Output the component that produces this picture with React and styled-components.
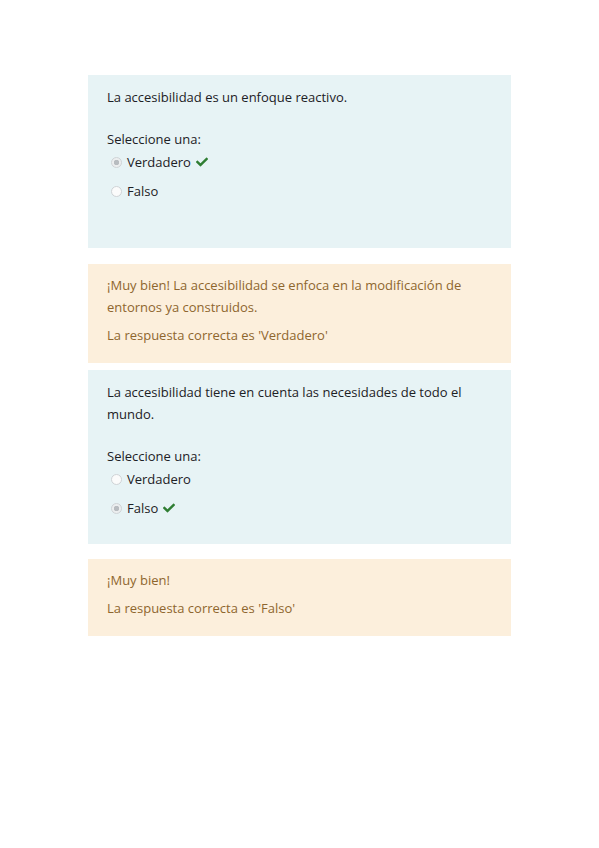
import React from "react";
import styled, { createGlobalStyle } from "styled-components";

const GlobalStyle = createGlobalStyle`
  body {
    margin: 0;
    background: #fff;
    font-family: "Open Sans", "Noto Sans", sans-serif;
  }
`;

const questions = [
  {
    text: "La accesibilidad es un enfoque reactivo.",
    options: ["Verdadero", "Falso"],
    selected: 0,
    bottom: 46,
    gapAfter: 16,
    feedback: [
      "¡Muy bien! La accesibilidad se enfoca en la modificación de entornos ya construidos.",
      "La respuesta correcta es 'Verdadero'",
    ],
    feedbackGap: 7,
  },
  {
    text: "La accesibilidad tiene en cuenta las necesidades de todo el mundo.",
    options: ["Verdadero", "Falso"],
    selected: 1,
    bottom: 25,
    gapAfter: 15,
    feedback: ["¡Muy bien!", "La respuesta correcta es 'Falso'"],
    feedbackGap: 0,
  },
];

function Check() {
  return (
    <CheckIcon viewBox="0 0 512 512" aria-hidden="true">
      <path d="M173.9 439.4l-166.4-166.4c-10-10-10-26.2 0-36.2l36.2-36.2c10-10 26.2-10 36.2 0L192 312.7 432.1 72.6c10-10 26.2-10 36.2 0l36.2 36.2c10 10 10 26.2 0 36.2l-294.4 294.4c-10 10-26.2 10-36.2 0z" />
    </CheckIcon>
  );
}

export default function App() {
  return (
    <>
      <GlobalStyle />
      <Page>
        {questions.map((q, i) => (
          <React.Fragment key={i}>
            <QuestionCard $bottom={q.bottom}>
              <QuestionText>{q.text}</QuestionText>
              <Prompt>Seleccione una:</Prompt>
              {q.options.map((opt, j) => (
                <Option key={opt}>
                  <Radio $checked={j === q.selected} />
                  <OptionLabel>{opt}</OptionLabel>
                  {j === q.selected && <Check />}
                </Option>
              ))}
            </QuestionCard>
            <Spacer $h={q.gapAfter} />
            <Feedback>
              {q.feedback.map((f, k) => (
                <FeedbackLine key={k}>{f}</FeedbackLine>
              ))}
            </Feedback>
            <Spacer $h={q.feedbackGap} />
          </React.Fragment>
        ))}
      </Page>
    </>
  );
}

const Page = styled.div`
  display: flex;
  flex-direction: column;
  width: 423px;
  padding: 75px 0 0 88px;
`;

const Spacer = styled.div`
  height: ${(p) => p.$h}px;
`;

const QuestionCard = styled.div`
  background: #e7f3f5;
  padding: 11px 30px ${(p) => p.$bottom}px 19px;
  color: #1d2125;
  font-size: 13px;
  line-height: 22px;
`;

const QuestionText = styled.div`
  margin-bottom: 20px;
`;

const Prompt = styled.div`
  margin-bottom: 1px;
`;

const Option = styled.div`
  display: flex;
  align-items: center;
  height: 22px;
  padding-left: 4px;
  margin-bottom: 7px;

  &:last-child {
    margin-bottom: 0;
  }
`;

const Radio = styled.span`
  box-sizing: border-box;
  width: 11px;
  height: 11px;
  border-radius: 50%;
  border: 1px solid #cfd3d6;
  background: ${(p) =>
    p.$checked
      ? "radial-gradient(circle, #b8bcc0 0 2.5px, #eceeef 3px)"
      : "#fbfbfb"};
  margin-right: 5px;
`;

const OptionLabel = styled.span``;

const CheckIcon = styled.svg`
  width: 12px;
  height: 12px;
  fill: #2f7d32;
  margin-left: 5px;
`;

const Feedback = styled.div`
  background: #fcefdc;
  padding: 10px 30px 17px 19px;
  color: #8e662e;
  font-size: 13px;
  line-height: 22px;
`;

const FeedbackLine = styled.p`
  margin: 0 0 6px;

  &:last-child {
    margin-bottom: 0;
  }
`;
